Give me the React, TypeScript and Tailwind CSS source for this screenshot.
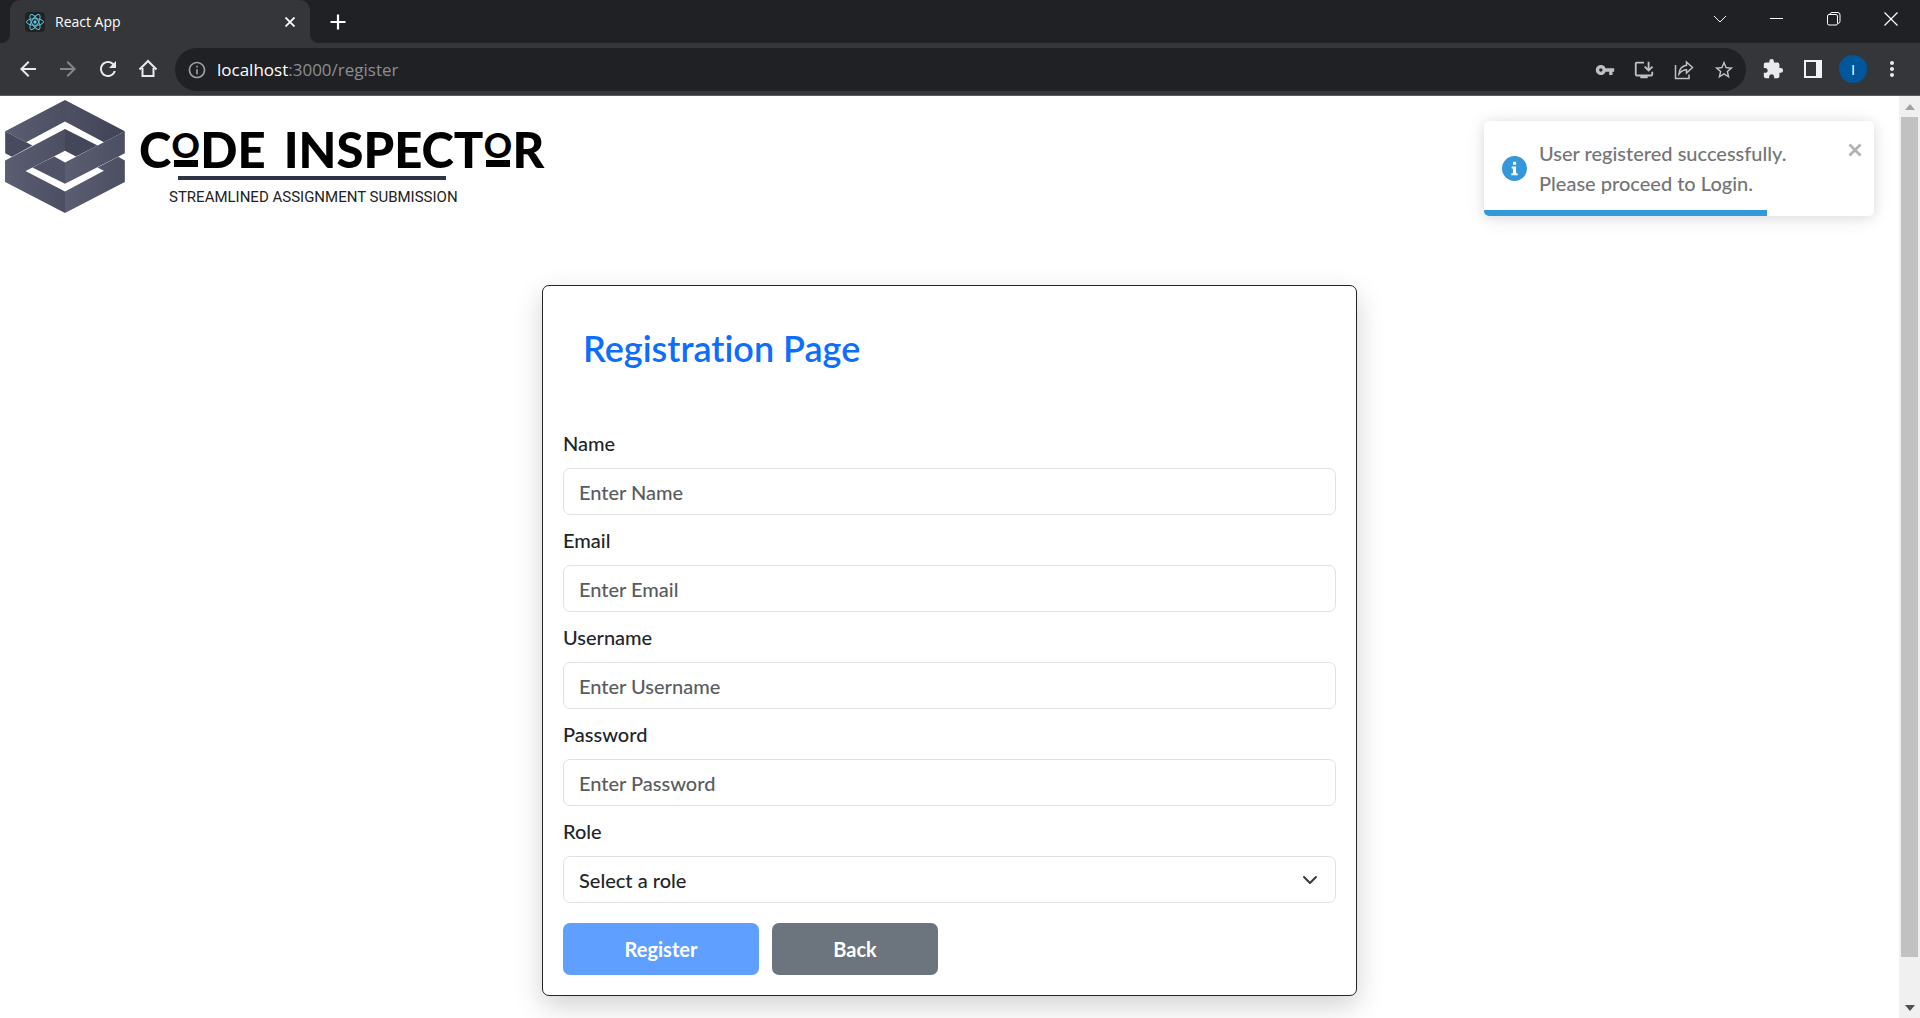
import React from "react";
import {
  MdVpnKey,
  MdOutlineInstallDesktop,
  MdStarBorder,
  MdExtension,
  MdMoreVert,
  MdArrowBack,
  MdArrowForward,
  MdRefresh,
  MdInfoOutline,
} from "react-icons/md";

function ReactMark() {
  return (
    <svg viewBox="0 0 20 20" className="size-5 rounded-sm bg-[#222222]" fill="none" stroke="#5cc3dd" aria-hidden="true">
      <ellipse cx="10" cy="10" rx="8.5" ry="3.3" />
      <ellipse cx="10" cy="10" rx="8.5" ry="3.3" transform="rotate(60 10 10)" />
      <ellipse cx="10" cy="10" rx="8.5" ry="3.3" transform="rotate(120 10 10)" />
      <circle cx="10" cy="10" r="1.2" fill="#61dafb" />
    </svg>
  );
}

function TabStrip() {
  return (
    <div className="flex h-[43px] shrink-0 items-stretch bg-[#202124] pl-[10px]">
      <div className="relative flex w-[300px] items-center rounded-t-[10px] bg-[#35363a] pl-[15px] pr-[10px] text-white">
        <span className="absolute -left-[10px] bottom-0 size-[10px] bg-[radial-gradient(circle_at_0_0,#202124_10px,#35363a_11px)]" />
        <span className="absolute -right-[10px] bottom-0 size-[10px] bg-[radial-gradient(circle_at_100%_0,#202124_10px,#35363a_11px)]" />
        <ReactMark />
        <span className="ml-[10px] flex-1 text-[14px]">React App</span>
        <button aria-label="Close tab" className="flex size-5 items-center justify-center">
          <svg viewBox="0 0 10 10" className="size-[10px]" stroke="currentColor" strokeWidth="1.8">
            <path d="M0.5 0.5L9.5 9.5M9.5 0.5L0.5 9.5" />
          </svg>
        </button>
      </div>
      <button aria-label="New tab" className="ml-4 flex w-6 items-center justify-center text-white">
        <svg viewBox="0 0 16 16" className="size-4" stroke="currentColor" strokeWidth="2.2">
          <path d="M8 0.5V15.5M0.5 8H15.5" />
        </svg>
      </button>
      <div className="ml-auto flex h-[37px] text-white">
        <button aria-label="Search tabs" className="flex w-[57px] items-center justify-center">
          <svg viewBox="0 0 14 8" className="h-2 w-[14px]" fill="none" stroke="currentColor">
            <path d="M1 1L7 7L13 1" />
          </svg>
        </button>
        <button aria-label="Minimize" className="flex w-[57px] items-center justify-center">
          <span className="h-px w-[13px] bg-white" />
        </button>
        <button aria-label="Restore" className="flex w-[57px] items-center justify-center">
          <svg viewBox="0 0 14 14" className="size-[14px]" fill="none" stroke="currentColor">
            <rect x="0.5" y="2.5" width="10" height="10.5" rx="1.5" />
            <path d="M3 2.5V2Q3.5 0.5 5 0.5H11Q13 0.5 13 3V9.5Q13 11 11 11.5" />
          </svg>
        </button>
        <button aria-label="Close window" className="flex w-[58px] items-center justify-center">
          <svg viewBox="0 0 14 14" className="size-[14px]" stroke="currentColor" strokeWidth="1.2">
            <path d="M0.5 0.5L13.5 13.5M13.5 0.5L0.5 13.5" />
          </svg>
        </button>
      </div>
    </div>
  );
}

function Toolbar() {
  return (
    <div className="flex h-[53px] shrink-0 items-start border-b border-[#5a5b5f] bg-[#35363a] pl-4 pr-4 pt-[5px] text-[#e8eaed]">
      <div className="flex h-[42px] items-center gap-4">
        <button aria-label="Back to previous page"><MdArrowBack className="size-6" /></button>
        <button aria-label="Forward" className="text-[#85868a]"><MdArrowForward className="size-6" /></button>
        <button aria-label="Reload"><MdRefresh className="size-6" /></button>
        <button aria-label="Home">
          <svg viewBox="0 0 24 24" className="size-6" fill="none" stroke="currentColor" strokeWidth="2">
            <path d="M6.5 11V19H17.5V11M3.5 12.5L12 4L20.5 12.5" />
          </svg>
        </button>
      </div>
      <div className="ml-[15px] flex h-[43px] flex-1 items-center rounded-full bg-[#202124] pl-3 pr-[11px] text-[#bdc1c6]">
        <MdInfoOutline className="size-5 text-[#9aa0a6]" />
        <div className="relative ml-[10px] flex-1 text-[17px] text-[#8b8e92]">
          <p aria-hidden="true">
            <span className="text-white">localhost</span>:3000/register
          </p>
          <input
            aria-label="Address"
            className="absolute inset-0 w-full bg-transparent text-transparent outline-none"
          />
        </div>
        <div className="flex items-center gap-[18px]">
          <button aria-label="Passwords"><MdVpnKey className="size-5" /></button>
          <button aria-label="Install app"><MdOutlineInstallDesktop className="size-[22px]" /></button>
          <button aria-label="Share">
            <svg viewBox="0 0 22 22" className="size-[22px]" fill="none" stroke="currentColor" strokeWidth="1.5">
              <path d="M2.500 6V19.500H16V15.500M13.500 3L19.500 8.500L13.500 14V10.800Q9 10.800 6 15Q6.500 7.500 13.500 6.300Z" />
            </svg>
          </button>
          <button aria-label="Bookmark"><MdStarBorder className="size-[22px]" /></button>
        </div>
      </div>
      <div className="ml-4 flex h-[42px] items-center">
        <button aria-label="Extensions"><MdExtension className="size-[22px]" /></button>
        <button aria-label="Side panel" className="ml-5 flex h-[18px] w-[18px] border-2 border-r-[6px] border-[#f1f3f4]" />
        <button aria-label="Profile" className="ml-[17px] flex size-7 items-center justify-center rounded-full bg-[#01579b] text-[15px] text-white">
          I
        </button>
        <button aria-label="Menu" className="ml-[13px]"><MdMoreVert className="size-6" /></button>
      </div>
    </div>
  );
}

function CubeMark() {
  return (
    <svg viewBox="15 28 360 340" className="h-[113px] w-[120px]" aria-hidden="true">
      <defs>
        <linearGradient id="lit" x1="0" y1="0" x2="1" y2="0">
          <stop offset="0" stopColor="#5b5e72" />
          <stop offset="1" stopColor="#4c4e62" />
        </linearGradient>
        <linearGradient id="dim" x1="0" y1="0" x2="1" y2="0">
          <stop offset="0" stopColor="#4e5064" />
          <stop offset="1" stopColor="#404255" />
        </linearGradient>
      </defs>
      <path fill="url(#lit)" d="M195 28V93L78 155L15 122Z" />
      <path fill="url(#dim)" d="M195 28L375 122L312 155L195 93Z" />
      <path fill="#484b5f" d="M15 122L97 165L35 199L15 188Z" />
      <path fill="url(#lit)" d="M15 210L195 115V181L78 241L15 275Z" />
      <path fill="#44465a" d="M195 115L293 165L228 198L195 181Z" />
      <path fill="#505267" d="M97 231L163 198L195 216V280Z" />
      <path fill="url(#lit)" d="M375 122V188L195 280V216Z" />
      <path fill="url(#lit)" d="M15 210L195 303V368L15 275Z" />
      <path fill="url(#lit)" d="M355 199L375 210V275L195 368V303L312 241L293 231Z" />
    </svg>
  );
}

function RaisedO() {
  return (
    <span className="mx-px inline-flex h-[36px] w-[27px] flex-col items-center justify-between align-baseline">
      <span className="flex h-[27px] items-center text-[35px] leading-[27px]">O</span>
      <span className="h-[7px] w-6 bg-black" />
    </span>
  );
}

function Logo() {
  return (
    <div className="flex items-start pl-[5px] pt-1">
      <CubeMark />
      <div className="ml-[14px] pt-[26px] text-black">
        <div className="flex h-[46px] items-start gap-[18px] font-['Lato'] text-[49px] font-black leading-[46px]">
          <span className="flex items-center">C<RaisedO />DE</span>
          <span className="flex items-center">INSPECT<RaisedO />R</span>
        </div>
        <div className="ml-[39px] mt-1 h-1 w-[268px] bg-[#2d3347]" />
        <p className="ml-[30px] mt-[5px] font-['Roboto',sans-serif] text-[15px] leading-[24px] text-[#222222]">
          STREAMLINED ASSIGNMENT SUBMISSION
        </p>
      </div>
    </div>
  );
}

function Toast() {
  return (
    <div
      role="status"
      className="absolute right-[25px] top-[25px] flex h-[95px] w-[390px] overflow-hidden rounded-[5px] bg-white pl-[18px] pr-3 text-[20px] font-medium leading-[30px] text-[#757575] shadow-[0_1px_12px_rgba(0,0,0,0.1),0_3px_22px_rgba(0,0,0,0.07)]"
    >
      <svg viewBox="0 0 24 24" className="mt-[35px] size-[25px] shrink-0" aria-hidden="true">
        <circle cx="12" cy="12" r="12" fill="#3498db" />
        <path fill="#fff" d="M10.5 5.5H13.5V8.3H10.5ZM9.3 10H13.5V16.5H15V18.5H9V16.5H10.5V12H9.3Z" />
      </svg>
      <p className="ml-3 mt-[17px] flex-1">
        User registered successfully.
        <br />
        Please proceed to Login.
      </p>
      <button aria-label="Dismiss" className="mt-[22px] flex size-[14px] items-center justify-center text-[#b2b2b2]">
        <svg viewBox="0 0 14 14" className="size-[14px]" stroke="currentColor" strokeWidth="2.8">
          <path d="M1.500 1.500L12.500 12.500M12.500 1.500L1.500 12.500" />
        </svg>
      </button>
      <div className="absolute bottom-0 left-0 h-[6px] w-[283px] bg-[#3498db]" />
    </div>
  );
}

const fields = [
  { id: "name", label: "Name", type: "text" },
  { id: "email", label: "Email", type: "email" },
  { id: "username", label: "Username", type: "text" },
  { id: "password", label: "Password", type: "password" },
];

function RegistrationCard() {
  return (
    <form className="mx-auto mt-[72px] w-full max-w-[815px] rounded-[7px] border border-[#212529] bg-white p-5 text-[20px] font-medium leading-[30px] text-[#212529] shadow-[0_10px_28px_rgba(0,0,0,0.18)]">
      <h1 className="px-5 pb-[58px] pt-5 text-[36px] font-semibold leading-[44px] text-[#0d6efd]">Registration Page</h1>
      {fields.map((field) => (
        <div key={field.id} className="mb-[10px]">
          <label htmlFor={field.id} className="mb-[10px] block">{field.label}</label>
          <input
            id={field.id}
            type={field.type}
            placeholder={`Enter ${field.label}`}
            className="block h-[47px] w-full rounded-[7px] border border-[#dee2e6] bg-white px-[15px] placeholder:text-[#595c5f]"
          />
        </div>
      ))}
      <label htmlFor="role" className="mb-[10px] block">Role</label>
      <div className="relative">
        <select id="role" className="block h-[47px] w-full appearance-none rounded-[7px] border border-[#dee2e6] bg-white px-[15px]">
          <option>Select a role</option>
        </select>
        <svg viewBox="0 0 16 16" className="pointer-events-none absolute right-[18px] top-[16px] size-4" fill="none" stroke="#343a40" strokeWidth="2" strokeLinecap="round" strokeLinejoin="round">
          <path d="M2 5L8 11L14 5" />
        </svg>
      </div>
      <div className="mt-5 flex gap-[13px] font-bold text-white">
        <button type="button" className="h-[52px] w-[196px] rounded-[7px] bg-[#5f9fff]">Register</button>
        <button type="button" className="h-[52px] w-[166px] rounded-[7px] bg-[#6c757d]">Back</button>
      </div>
    </form>
  );
}

function ScrollRail() {
  return (
    <div className="flex w-[21px] shrink-0 flex-col items-center bg-[#f0f0f0]" aria-hidden="true">
      <div className="flex h-[21px] items-center">
        <svg viewBox="0 0 10 6" className="h-[6px] w-[10px]"><path fill="#a3a3a3" d="M0 6L5 0L10 6Z" /></svg>
      </div>
      <div className="w-[17px] flex-[840] bg-[#c1c1c1]" />
      <div className="flex-[40]" />
      <div className="flex h-[21px] items-center">
        <svg viewBox="0 0 10 6" className="h-[6px] w-[10px]"><path fill="#505050" d="M0 0L5 6L10 0Z" /></svg>
      </div>
    </div>
  );
}

export default function App() {
  return (
    <div className="flex h-screen flex-col overflow-hidden bg-white font-['Open_Sans',sans-serif]">
      <header>
        <TabStrip />
        <Toolbar />
      </header>
      <div className="flex min-h-0 flex-1">
        <main className="relative min-w-0 flex-1 overflow-hidden font-['Lato',sans-serif] [font-variant-ligatures:none]">
          <Logo />
          <RegistrationCard />
          <Toast />
        </main>
        <ScrollRail />
      </div>
    </div>
  );
}
